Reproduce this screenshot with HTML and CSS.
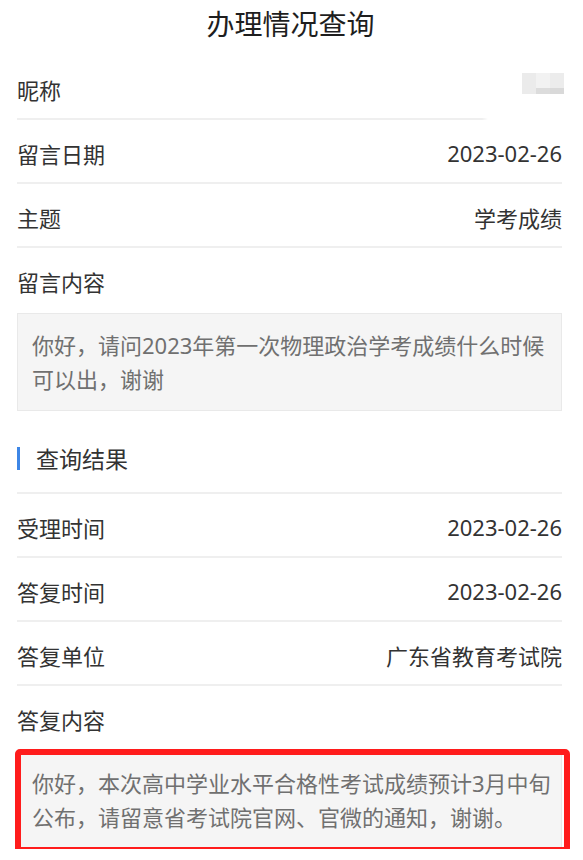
FILE: index.html
```html
<!DOCTYPE html>
<html lang="zh-CN">
<head>
<meta charset="utf-8">
<title>办理情况查询</title>
<link rel="stylesheet" href="styles.css">
</head>
<body>
<div class="page">
  <header class="header"><h1 class="title">办理情况查询</h1></header>

  <div class="row row-nick">
    <span class="label">昵称</span>
    <span class="mosaic">
      <i class="m1"></i><i class="m2"></i><i class="m3"></i>
      <i class="m4"></i><i class="m5"></i><i class="m6"></i>
    </span>
  </div>
  <div class="row">
    <span class="label">留言日期</span>
    <span class="value">2023-02-26</span>
  </div>
  <div class="row">
    <span class="label">主题</span>
    <span class="value">学考成绩</span>
  </div>
  <div class="row row-plain">
    <span class="label">留言内容</span>
  </div>
  <div class="content-box">你好，请问2023年第一次物理政治学考成绩什么时候可以出，谢谢</div>

  <div class="section-head"><span class="bar"></span><span class="section-title">查询结果</span></div>

  <div class="row">
    <span class="label">受理时间</span>
    <span class="value">2023-02-26</span>
  </div>
  <div class="row">
    <span class="label">答复时间</span>
    <span class="value">2023-02-26</span>
  </div>
  <div class="row">
    <span class="label">答复单位</span>
    <span class="value">广东省教育考试院</span>
  </div>
  <div class="row row-plain">
    <span class="label">答复内容</span>
  </div>
  <div class="content-box answer">你好，本次高中学业水平合格性考试成绩预计3月中旬公布，请留意省考试院官网、官微的通知，谢谢。<span class="highlight"></span></div>
</div>
</body>
</html>
```

FILE: styles.css
```css
* { box-sizing: border-box; }
html, body { margin: 0; padding: 0; background: #fff; }
body {
  font-family: "Noto Sans", "Noto Sans CJK SC", sans-serif;
  color: #333;
}
.page {
  padding: 0 21px 0 17px;
}
.header {
  height: 56px;
  display: flex;
  justify-content: center;
  align-items: flex-start;
}
.title {
  margin: 0;
  font-size: 28px;
  font-weight: 400;
  line-height: 48px;
  color: #1e1e1e;
  padding-left: 2px;
}
.row {
  height: 64px;
  padding-top: 4px;
  display: flex;
  align-items: center;
  justify-content: space-between;
  border-bottom: 2px solid #efefef;
  font-size: 22px;
  position: relative;
}
.row-plain {
  border-bottom: none;
  height: 65px;
  padding-top: 0;
}
.label { color: #333; }
.value { color: #333; }
.row-nick::after {
  content: "";
  position: absolute;
  right: -21px;
  bottom: -6px;
  width: 101px;
  height: 30px;
  background: linear-gradient(to right, rgba(255,255,255,0) 0, #fff 6px, #fff 100%);
}
.mosaic {
  display: grid;
  grid-template-columns: repeat(3, 14px);
  grid-template-rows: repeat(2, 15px);
  margin-right: -2px;
  margin-top: -2px;
}
.mosaic i { display: block; }
.m1 { background: #ebebeb; }
.m2 { background: #f2f2f2; }
.m3 { background: #ececec; }
.m4 { background: #ebebeb; }
.m5 { background: #dcdcdc; }
.m6 { background: #d9d9d9; }
.content-box {
  background: #f5f5f5;
  border: 1px solid #e9e9e9;
  padding: 14px 6px 14px 14px;
  font-size: 22px;
  line-height: 34px;
  color: #707070;
  position: relative;
}
.section-head {
  margin-top: 19px;
  height: 64px;
  padding-bottom: 6px;
  display: flex;
  align-items: center;
  border-bottom: 2px solid #efefef;
}
.bar {
  width: 3px;
  height: 23px;
  background: #3d86e6;
  margin-right: 16px;
}
.section-title {
  font-size: 23px;
  color: #333;
}
.highlight {
  position: absolute;
  left: -3px;
  top: -3px;
  right: -9px;
  bottom: -5px;
  border: 6px solid #ff1c1c;
  border-radius: 5px;
  pointer-events: none;
}
```
